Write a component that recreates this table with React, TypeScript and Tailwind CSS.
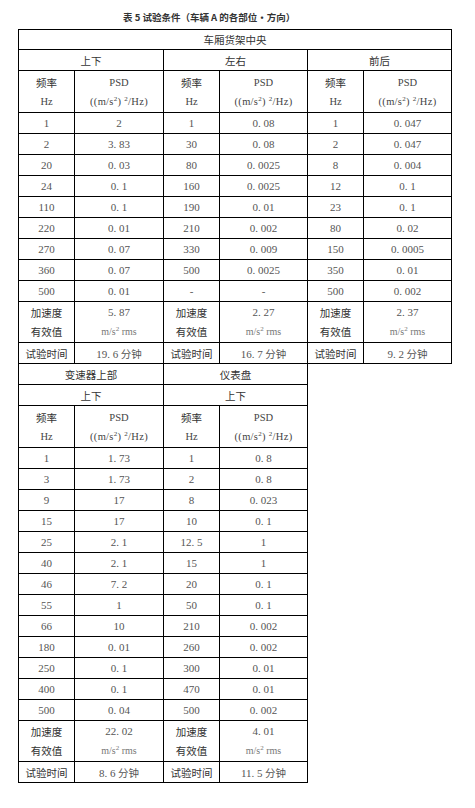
import React from "react";

const CJK = "font-['Noto_Sans_CJK_SC','Noto_Sans',sans-serif]";
const NUM = "font-['Liberation_Serif','Noto_Sans_CJK_SC',serif]";

const fmt = (s: string) => s.replace(".", ". ");

function Cell({
  children,
  className = "",
}: {
  children?: React.ReactNode;
  className?: string;
}) {
  return (
    <div
      className={
        "bg-white flex flex-col items-center justify-center text-center " +
        className
      }
    >
      {children}
    </div>
  );
}

function Label({ children }: { children: React.ReactNode }) {
  return (
    <span className={CJK + " text-[10.5px] text-[#333] leading-[19px]"}>
      {children}
    </span>
  );
}

function Num({ children }: { children: React.ReactNode }) {
  return (
    <span className={NUM + " text-[11px] text-[#555] leading-[19px]"}>
      {children}
    </span>
  );
}

function Sup() {
  return <sup className="text-[7px] relative -top-[4px]">2</sup>;
}

function Psd() {
  return (
    <span className={NUM + " text-[10.5px] text-[#444] leading-[19px] whitespace-nowrap tracking-[0.3px]"}>
      ((m/s<Sup />)&nbsp;<Sup />/Hz)
    </span>
  );
}

function HeaderPair() {
  return (
    <>
      <Cell className="h-[41px]">
        <Label>频率</Label>
        <span className={NUM + " text-[10.5px] text-[#444] leading-[19px]"}>Hz</span>
      </Cell>
      <Cell className="h-[41px]">
        <span className={NUM + " text-[10.5px] text-[#444] leading-[19px]"}>PSD</span>
        <Psd />
      </Cell>
    </>
  );
}

type Col = { rows: [string, string][]; acc: string; time: string };

const top: Col[] = [
  {
    rows: [
      ["1", "2"],
      ["2", "3.83"],
      ["20", "0.03"],
      ["24", "0.1"],
      ["110", "0.1"],
      ["220", "0.01"],
      ["270", "0.07"],
      ["360", "0.07"],
      ["500", "0.01"],
    ],
    acc: "5.87",
    time: "19.6",
  },
  {
    rows: [
      ["1", "0.08"],
      ["30", "0.08"],
      ["80", "0.0025"],
      ["160", "0.0025"],
      ["190", "0.01"],
      ["210", "0.002"],
      ["330", "0.009"],
      ["500", "0.0025"],
      ["-", "-"],
    ],
    acc: "2.27",
    time: "16.7",
  },
  {
    rows: [
      ["1", "0.047"],
      ["2", "0.047"],
      ["8", "0.004"],
      ["12", "0.1"],
      ["23", "0.1"],
      ["80", "0.02"],
      ["150", "0.0005"],
      ["350", "0.01"],
      ["500", "0.002"],
    ],
    acc: "2.37",
    time: "9.2",
  },
];

const bottom: Col[] = [
  {
    rows: [
      ["1", "1.73"],
      ["3", "1.73"],
      ["9", "17"],
      ["15", "17"],
      ["25", "2.1"],
      ["40", "2.1"],
      ["46", "7.2"],
      ["55", "1"],
      ["66", "10"],
      ["180", "0.01"],
      ["250", "0.1"],
      ["400", "0.1"],
      ["500", "0.04"],
    ],
    acc: "22.02",
    time: "8.6",
  },
  {
    rows: [
      ["1", "0.8"],
      ["2", "0.8"],
      ["8", "0.023"],
      ["10", "0.1"],
      ["12.5", "1"],
      ["15", "1"],
      ["20", "0.1"],
      ["50", "0.1"],
      ["210", "0.002"],
      ["260", "0.002"],
      ["300", "0.01"],
      ["470", "0.01"],
      ["500", "0.002"],
    ],
    acc: "4.01",
    time: "11.5",
  },
];

function Body({ cols }: { cols: Col[] }) {
  const n = cols[0].rows.length;
  const out: React.ReactNode[] = [];
  for (let i = 0; i < n; i++) {
    cols.forEach((c, j) => {
      const [f, p] = c.rows[i];
      out.push(
        <Cell key={`f${i}-${j}`} className="h-[20px]">
          <Num>{fmt(f)}</Num>
        </Cell>
      );
      out.push(
        <Cell key={`p${i}-${j}`} className="h-[20px]">
          <Num>{fmt(p)}</Num>
        </Cell>
      );
    });
  }
  cols.forEach((c, j) => {
    out.push(
      <Cell key={`a${j}`} className="h-[40px]">
        <Label>加速度</Label>
        <Label>有效值</Label>
      </Cell>
    );
    out.push(
      <Cell key={`av${j}`} className="h-[40px]">
        <Num>{fmt(c.acc)}</Num>
        <span className={NUM + " text-[10px] text-[#777] leading-[19px] whitespace-nowrap"}>
          m/s<Sup />&nbsp;rms
        </span>
      </Cell>
    );
  });
  cols.forEach((c, j) => {
    out.push(
      <Cell key={`t${j}`} className="h-[20px]">
        <Label>试验时间</Label>
      </Cell>
    );
    out.push(
      <Cell key={`tv${j}`} className="h-[20px]">
        <span className="leading-[19px] whitespace-nowrap">
          <span className={NUM + " text-[11px] text-[#555]"}>{fmt(c.time)}</span>
          <span className={CJK + " text-[10.5px] text-[#555]"}> 分钟</span>
        </span>
      </Cell>
    );
  });
  return <>{out}</>;
}

export default function App() {
  return (
    <div className="w-[475px] h-[808px] bg-white">
      <div className={CJK + " h-[29px] pt-[10px] pl-[123px] text-[9.5px] font-semibold text-[#333] leading-[14px] whitespace-nowrap"}>
        表 5 试验条件（车辆 A 的各部位・方向）
      </div>
      <div className="ml-[18px]">
        <div className="w-[434px] bg-black p-[1px] grid grid-cols-[55px_88px_55px_87px_55px_87px] gap-[1px]">
          <Cell className="col-span-6 h-[19px]">
            <Label>车厢货架中央</Label>
          </Cell>
          <Cell className="col-span-2 h-[20px]">
            <Label>上下</Label>
          </Cell>
          <Cell className="col-span-2 h-[20px]">
            <Label>左右</Label>
          </Cell>
          <Cell className="col-span-2 h-[20px]">
            <Label>前后</Label>
          </Cell>
          <HeaderPair />
          <HeaderPair />
          <HeaderPair />
          <Body cols={top} />
        </div>
        <div className="w-[290px] bg-black px-[1px] pb-[1px] grid grid-cols-[55px_88px_55px_87px] gap-[1px]">
          <Cell className="col-span-2 h-[20px]">
            <Label>变速器上部</Label>
          </Cell>
          <Cell className="col-span-2 h-[20px]">
            <Label>仪表盘</Label>
          </Cell>
          <Cell className="col-span-2 h-[20px]">
            <Label>上下</Label>
          </Cell>
          <Cell className="col-span-2 h-[20px]">
            <Label>上下</Label>
          </Cell>
          <HeaderPair />
          <HeaderPair />
          <Body cols={bottom} />
        </div>
      </div>
    </div>
  );
}
